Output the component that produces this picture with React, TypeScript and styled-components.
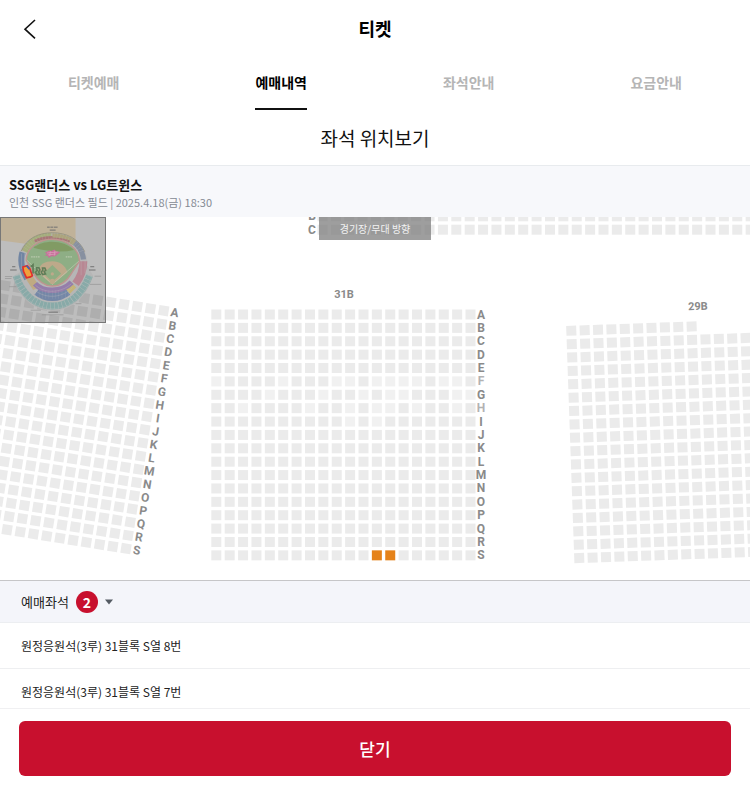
import React, { useState } from "react";
import styled, { createGlobalStyle } from "styled-components";

const GlobalStyle = createGlobalStyle`
  *, *::before, *::after { box-sizing: border-box; }
  body {
    margin: 0;
    background: #fff;
    color: #111;
    font-family: "Noto Sans CJK KR", "Noto Sans", sans-serif;
  }
  button { font-family: inherit; cursor: pointer; }
  h1, h2, h3, p, ul { margin: 0; padding: 0; }
`;

const Page = styled.div`
  display: flex;
  flex-direction: column;
  min-height: 100vh;
`;

const Header = styled.header`
  display: grid;
  grid-template-columns: 60px 1fr 60px;
  align-items: center;
  height: 58px;
`;

const BackButton = styled.button`
  display: flex;
  align-items: center;
  justify-content: center;
  width: 60px;
  height: 58px;
  padding: 0;
  border: 0;
  background: none;
`;

const HeaderTitle = styled.h1`
  padding-bottom: 2px;
  font-size: 18px;
  line-height: 26px;
  font-weight: 700;
  text-align: center;
  color: #000;
`;

const Tabs = styled.nav`
  display: grid;
  grid-template-columns: repeat(4, 1fr);
  justify-items: center;
`;

const Tab = styled.a<{ $active?: boolean }>`
  height: 52px;
  padding-top: 13px;
  font-size: 14px;
  line-height: 22px;
  font-weight: 700;
  text-decoration: none;
  color: ${(p) => (p.$active ? "#000" : "#b5b5b5")};
  border-bottom: 2px solid ${(p) => (p.$active ? "#111" : "transparent")};
`;

const SectionTitle = styled.h2`
  padding: 14px 0 13px;
  font-size: 19px;
  line-height: 28px;
  font-weight: 400;
  text-align: center;
`;

const GameInfo = styled.section`
  height: 52px;
  padding: 9px 9px 0;
  border-top: 1px solid #e8ebee;
  background: #f7f8fb;
`;

const GameTitle = styled.h3`
  font-size: 13px;
  line-height: 19px;
  font-weight: 700;
`;

const GameMeta = styled.p`
  font-size: 11px;
  line-height: 16px;
  color: #858a93;
`;

const MapArea = styled.section`
  position: relative;
  flex: 1;
  min-height: 240px;
  overflow: hidden;
`;

const SeatMap = styled.svg`
  position: absolute;
  inset: 0;
  width: 100%;
  height: 100%;
  font-family: Roboto, sans-serif;
  font-size: 12px;
  font-weight: 700;
  text-anchor: middle;
`;

const StageLabel = styled.div`
  position: absolute;
  top: 0;
  left: 50%;
  width: 112px;
  height: 23px;
  transform: translateX(-50%);
  background: rgba(120, 120, 120, 0.72);
  color: #f2f2f2;
  font-size: 10px;
  line-height: 23px;
  text-align: center;
`;

const MiniMap = styled.div`
  position: absolute;
  top: 0;
  left: 0;
  width: 106px;
  height: 106px;
  border: 1px solid #777;
  background: rgba(0, 0, 0, 0.26);
  svg { display: block; width: 100%; height: 100%; }
`;

const SeatToggle = styled.button`
  display: flex;
  align-items: center;
  gap: 7px;
  width: 100%;
  height: 43px;
  padding: 0 21px;
  border: 0;
  border-top: 1px solid #c6c6c8;
  border-bottom: 1px solid #eceef1;
  background: #f4f5fa;
  color: #222;
  font-size: 13px;
  line-height: 20px;
`;

const CountBadge = styled.span`
  width: 22px;
  height: 22px;
  border-radius: 50%;
  background: #c8102e;
  color: #fff;
  font-size: 14px;
  line-height: 22px;
  font-weight: 700;
  text-align: center;
`;

const SeatList = styled.ul`
  height: 85px;
  overflow-y: auto;
  scrollbar-width: none;
  list-style: none;
`;

const SeatItem = styled.li`
  height: 46px;
  padding: 0 21px;
  border-bottom: 1px solid #eeeff1;
  color: #222;
  font-size: 12px;
  line-height: 45px;
`;

const Footer = styled.footer`
  padding: 12px 19px 13px;
  border-top: 1px solid #f0f0f2;
`;

const CloseButton = styled.button`
  display: block;
  width: 100%;
  height: 55px;
  border: 0;
  border-radius: 6px;
  background: #c8102e;
  color: #fff;
  font-size: 17px;
  font-weight: 500;
`;

const LETTERS = "ABCDEFGHIJKLMNOPQRS".split("");
const SEAT = 10;
const PITCH = 13.38;
const range = (n: number) => Array.from({ length: n }, (_, i) => i);

type BlockProps = {
  x: number;
  y: number;
  angle?: number;
  rows: number;
  cols: number;
  booked?: string[];
  faded?: string[];
  omit?: (row: number, col: number) => boolean;
};

/* x and y are the centre of the block's first seat. */
function SeatBlock({ x, y, angle = 0, rows, cols, booked = [], faded = [], omit }: BlockProps) {
  return (
    <g transform={`translate(${x} ${y}) rotate(${angle})`}>
      {range(rows).map((r) =>
        range(cols).map((c) => {
          if (omit?.(r, c)) return null;
          const id = `${LETTERS[r]}${c}`;
          const fill = booked.includes(id) ? "#e58219" : faded.includes(id) ? "#f1f1f1" : "#ebebeb";
          return (
            <rect
              key={id}
              x={c * PITCH - SEAT / 2}
              y={r * PITCH - SEAT / 2}
              width={SEAT}
              height={SEAT}
              fill={fill}
            />
          );
        })
      )}
    </g>
  );
}

function RowLetters({ x, y, angle = 0 }: { x: number; y: number; angle?: number }) {
  return (
    <g transform={`translate(${x} ${y}) rotate(${angle})`} fill="#8a8a8a">
      {LETTERS.map((l, i) => (
        <text key={l} x={0} y={i * PITCH + 4} opacity={angle === 0 && (l === "F" || l === "H") ? 0.65 : 1}>
          {l}
        </text>
      ))}
    </g>
  );
}

const FADED = [
  "F0", "F5", "F9", "F10", "F12", "F13", "F14", "F15", "F17", "F18", "G4", "G8", "G11", "G13", "G14",
  "G18", "G19", "H2", "H7", "H10", "H12", "H13", "H15", "H18", "I10", "I12",
];

function Stadium() {
  return (
    <svg viewBox="0 21 318 318" aria-hidden="true">
      <path d="M0 21H228V112L92 102 0 90Z" fill="#c0b299" />
      <path
        d="M55 155C48 105 95 66 157 66S268 105 263 165L282 198C262 258 222 304 157 304S52 258 36 200L60 185Z"
        fill="#b6b6b6"
      />
      <g fill="none">
        <path d="M46 197C64 254 105 290 157 290S249 254 271 197" stroke="#88aaa8" strokeWidth="21" />
        <path d="M46 197C64 254 105 290 157 290S249 254 271 197" stroke="#b2bbb9" strokeWidth="21" strokeDasharray="1.5 10" />
        <path d="M40 202C58 262 103 298 157 298S256 262 277 202" stroke="#b2bbb9" strokeWidth="1" />
        <path d="M66 126C57 156 64 180 80 206" stroke="#7085a3" strokeWidth="19" />
        <path d="M72 124C88 90 118 76 154 76" stroke="#a5ae7d" strokeWidth="19" />
        <path d="M103 91C132 76 181 76 210 91" stroke="#a87777" strokeWidth="7" />
        <path d="M157 76C185 76 207 83 225 98" stroke="#aca47c" strokeWidth="17" />
        <path d="M103 93C132 80 181 80 210 93" stroke="#a87777" strokeWidth="6" />
        <path d="M62 122C78 84 114 66 157 66S238 84 256 124" stroke="#8b876f" strokeWidth="2" />
        <path d="M225 97C243 111 250 127 252 148" stroke="#8790a0" strokeWidth="16" />
        <path d="M252 153C252 180 244 200 228 222" stroke="#b88793" strokeWidth="24" />
        <path d="M84 199L108 236" stroke="#c0aa82" strokeWidth="22" />
        <path d="M203 245L222 226" stroke="#c5b477" strokeWidth="22" />
        <path d="M110 246C138 268 176 268 204 246" stroke="#7487a7" strokeWidth="25" />
        <path d="M104 222C127 248 184 251 216 218" stroke="#957eaa" strokeWidth="17" />
        <g stroke="#c0bdbe" strokeWidth="1">
          <path d="M97 236C130 269 184 269 219 233M105 226C131 252 183 252 215 222" />
          <path d="M245 150V196M257 150V190M63 130V177M72 128V172" />
          <path d="M106 255H210" strokeWidth="26" strokeDasharray="1 9" opacity=".4" />
          <path d="M72 124C88 90 118 76 157 76S230 90 244 126" strokeWidth="19" strokeDasharray="1 8" opacity=".5" />
        </g>
      </g>
      <path d="M77 150C79 113 112 86 157 86S239 116 240 153L217 188C202 214 181 229 157 229S113 214 98 188Z" fill="#8eae85" stroke="#bf938f" strokeWidth="4" />
      <path d="M99 112C131 86 192 87 223 119Q171 131 99 112Z" fill="#819b64" />
      <path d="M112 187C117 161 136 153 157 153S197 165 203 187L163 220H151Z" fill="#bda98a" />
      <path d="M157 165L184 191 157 216 130 191Z" fill="#8fad83" />
      <path d="M79 150L157 224 238 153" fill="none" stroke="#c3c9b6" strokeWidth="2" />
      <circle cx="157" cy="192" r="5" fill="#bda98a" />
      <circle cx="157" cy="215" r="8" fill="#bda98a" />
      <path d="M134 127l13-7 7 2 9-5 5 6 13 2-7 7-10 7-10-1-8 5-3-6-9-1 7-5Z" fill="#c76f9a" />
      <path d="M141 128l32-3M143 134l25-3M151 123l-2 14M165 121l-2 15" stroke="#dda4bb" strokeWidth="2" />
      <g stroke="#707070" strokeWidth="3" fill="none">
        <path d="M141 49h8m2 0h8m2 0h12M149 58h18" />
        <path d="M34 170h10m-16 10h20M273 170h12m-16 10h20" />
        <path d="M145 309h29" />
      </g>
      <path d="M125 317h66M91 303h31M12 200h22m-22 6h20M25 231h23M228 283h18M272 224h35M286 199h20" stroke="#929292" strokeWidth="2" />
      <path d="M92 140h27M198 140h21" stroke="#b8c8ac" strokeWidth="4" strokeDasharray="5 2" />
      <path d="M67 171l13-4 8 9 8 21-6 4-12 3-9-19Z" fill="#f0a13c" stroke="#e0302b" strokeWidth="5" />
      <path d="M78 167l9 11" stroke="#3767b8" strokeWidth="5" />
      <g fill="none" stroke="#5f7d58" strokeWidth="5">
        <path d="M91 170l7-6v27M107 173h9l3 7-4 6 4 7-9 1-5-7 6-6-4-7M127 174h7l3 7-5 4 4 7-9 2-4-8 5-5Z" />
      </g>
    </svg>
  );
}

const seats = ["원정응원석(3루) 31블록 S열 8번", "원정응원석(3루) 31블록 S열 7번"];

export default function App() {
  const [open, setOpen] = useState(true);
  return (
    <>
      <GlobalStyle />
      <Page>
        <Header>
          <BackButton aria-label="뒤로">
            <svg width="14" height="22" viewBox="0 0 14 22" fill="none" stroke="#111" strokeWidth="1.6">
              <path d="M12 2L2 11.2 12 20.4" />
            </svg>
          </BackButton>
          <HeaderTitle>티켓</HeaderTitle>
        </Header>
        <Tabs>
          <Tab href="#ticket">티켓예매</Tab>
          <Tab href="#history" $active aria-current="page">예매내역</Tab>
          <Tab href="#seats">좌석안내</Tab>
          <Tab href="#price">요금안내</Tab>
        </Tabs>
        <SectionTitle>좌석 위치보기</SectionTitle>
        <GameInfo>
          <GameTitle>SSG랜더스 vs LG트윈스</GameTitle>
          <GameMeta>인천 SSG 랜더스 필드 | 2025.4.18(금) 18:30</GameMeta>
        </GameInfo>
        <MapArea>
          <SeatMap viewBox="0 0 750 363" preserveAspectRatio="xMidYMin slice" role="img" aria-label="좌석 배치도">
            <SeatBlock x={322.5} y={-0.7} rows={2} cols={33} />
            <g fill="#8a8a8a">
              <text x="312" y="3">B</text>
              <text x="312" y="17">C</text>
              <text x="344" y="81" fontSize="11">31B</text>
              <text x="698" y="93" fontSize="11" transform="rotate(-2 698 93)">29B</text>
            </g>
            <SeatBlock x={5.1} y={68.6} angle={9} rows={19} cols={13} />
            <SeatBlock x={-8.1} y={66.5} angle={9} rows={18} cols={1} />
            <RowLetters x={174.5} y={95.6} angle={9} />
            <SeatBlock x={216.3} y={97.5} rows={19} cols={20} booked={["S12", "S13"]} faded={FADED} />
            <RowLetters x={481} y={97.5} />
            <SeatBlock x={571.3} y={113.7} angle={-2} rows={18} cols={15} omit={(r, c) => r === 0 && c > 9} />
          </SeatMap>
          <StageLabel>경기장/무대 방향</StageLabel>
          <MiniMap>
            <Stadium />
          </MiniMap>
        </MapArea>
        <SeatToggle aria-expanded={open} onClick={() => setOpen(!open)}>
          예매좌석
          <CountBadge>2</CountBadge>
          <svg width="8" height="6" viewBox="0 0 8 6" fill="#555b63" aria-hidden="true">
            <path d="M0 .5H8L4 5.5Z" />
          </svg>
        </SeatToggle>
        {open && (
          <SeatList>
            {seats.map((s) => (
              <SeatItem key={s}>{s}</SeatItem>
            ))}
          </SeatList>
        )}
        <Footer>
          <CloseButton>닫기</CloseButton>
        </Footer>
      </Page>
    </>
  );
}
